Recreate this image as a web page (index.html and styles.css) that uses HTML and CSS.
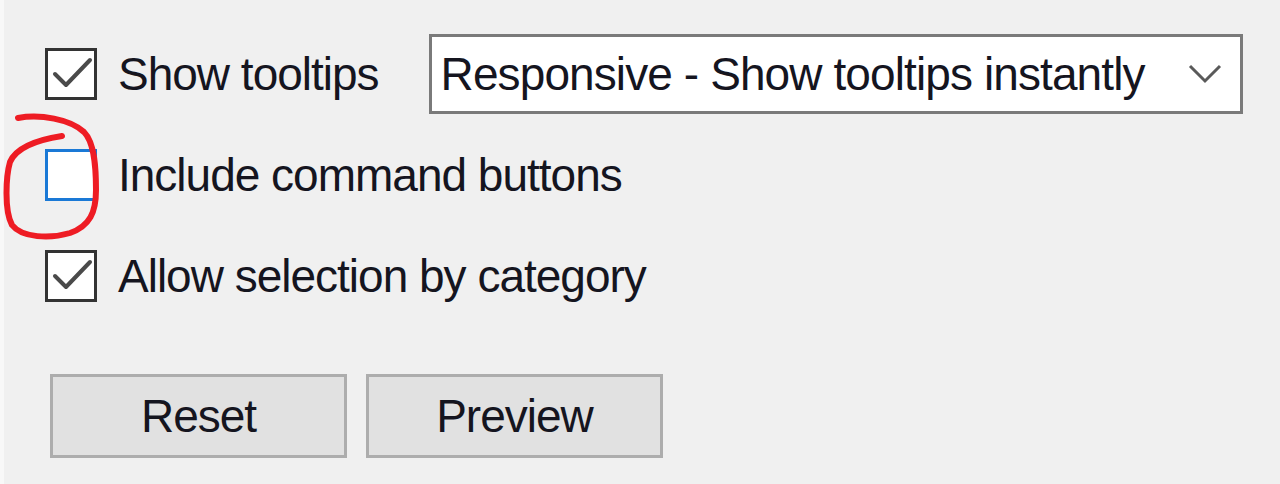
FILE: index.html
```html
<!DOCTYPE html>
<html lang="en">
<head>
  <meta charset="UTF-8">
  <title>Tooltip Options</title>
  <link rel="stylesheet" href="styles.css">
</head>
<body>

  <div class="panel">
    <div class="row">
      <span class="check checked">
        <svg viewBox="0 0 52 52" width="52" height="52"><path d="M10 26 L21 37 L45 12" /></svg>
      </span>
      <span class="label">Show tooltips</span>
      <div class="dropdown">
        <span class="dropdown-text">Responsive - Show tooltips instantly</span>
        <svg class="chevron" viewBox="0 0 34 20" width="34" height="20"><path d="M2 2 L17 17 L32 2" /></svg>
      </div>
    </div>

    <div class="row">
      <span class="check focused"></span>
      <span class="label">Include command buttons</span>
    </div>

    <div class="row">
      <span class="check checked">
        <svg viewBox="0 0 52 52" width="52" height="52"><path d="M10 26 L21 37 L45 12" /></svg>
      </span>
      <span class="label">Allow selection by category</span>
    </div>

    <div class="buttons">
      <button>Reset</button>
      <button>Preview</button>
    </div>
  </div>

  <!-- red marker scribble around the unchecked box -->
  <svg class="scribble" viewBox="0 0 120 250" width="120" height="250">
    <path d="M18 118 C 40 114, 70 119, 84 132 C 95 143, 96 170, 96 190 C 96 212, 90 226, 70 233 C 50 239, 22 238, 12 225 C 4 210, 6 176, 10 162 C 16 148, 36 140, 62 136" />
  </svg>

</body>
</html>
```

FILE: styles.css
```css
* {
  box-sizing: border-box;
}

body {
  margin: 0;
  height: 484px;
  overflow: hidden;
  background-color: #f0f0f0;
  font-family: "Liberation Sans", Arial, sans-serif;
  color: #15151f;
  border-left: 4px solid #f8f8f8;
}

.panel {
  padding: 23px 0 0 41px;
}

.row {
  display: flex;
  align-items: center;
  height: 101px;
}

.check {
  width: 52px;
  height: 52px;
  flex-shrink: 0;
  background-color: #ffffff;
  border: 3px solid #333333;
  position: relative;
}

.check svg {
  position: absolute;
  left: -3px;
  top: -3px;
}

.check path {
  fill: none;
  stroke: #4a4a4a;
  stroke-width: 4;
  stroke-linecap: round;
  stroke-linejoin: round;
}

.check.focused {
  border-color: #1a79d6;
}

.label {
  margin-left: 21px;
  font-size: 46px;
  letter-spacing: -1px;
  white-space: nowrap;
}

.dropdown {
  margin-left: 50px;
  width: 814px;
  height: 80px;
  background-color: #ffffff;
  border: 3px solid #7a7a7a;
  display: flex;
  align-items: center;
  justify-content: space-between;
  padding: 0 18px 0 9px;
}

.dropdown-text {
  font-size: 46px;
  letter-spacing: -0.9px;
  white-space: nowrap;
}

.chevron path {
  fill: none;
  stroke: #5a5a5a;
  stroke-width: 3;
}

.buttons {
  display: flex;
  gap: 19px;
  margin: 48px 0 0 5px;
}

button {
  width: 297px;
  height: 84px;
  background-color: #e1e1e1;
  border: 3px solid #adadad;
  font-family: "Liberation Sans", Arial, sans-serif;
  font-size: 46px;
  letter-spacing: -1px;
  color: #15151f;
  padding: 0;
}

.scribble {
  position: absolute;
  left: 0;
  top: 0;
}

.scribble path {
  fill: none;
  stroke: #ee1c24;
  stroke-width: 6;
  stroke-linecap: round;
  stroke-linejoin: round;
}
```
